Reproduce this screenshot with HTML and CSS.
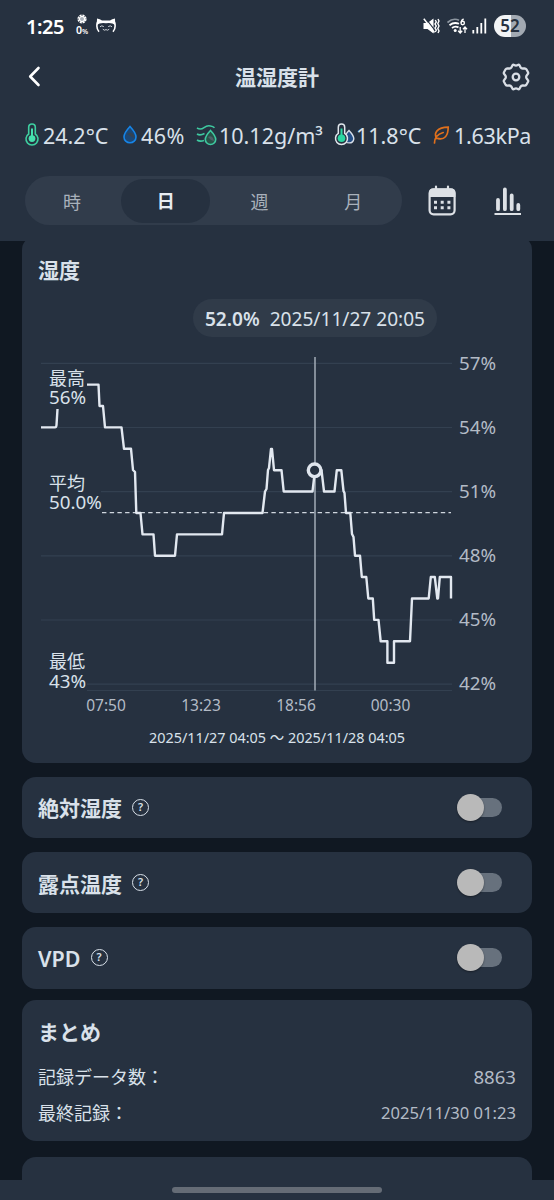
FILE: index.html
```html
<!DOCTYPE html>
<html lang="ja">
<head>
    <meta charset="UTF-8">
    <meta name="viewport" content="width=device-width, initial-scale=1.0">
    <title>温湿度計</title>
    <link rel="stylesheet" href="styles.css">
</head>
<body>

    <div class="app">
        <header class="header">
            <!-- Status bar -->
            <div class="status-bar">
                <span class="clock">1:25</span>
                <div class="weather">
                    <svg width="10" height="10" viewBox="0 0 10 10">
                        <circle cx="5" cy="5" r="3.9" fill="none" stroke="#fff" stroke-width="1.4" stroke-dasharray="2.2 0.86"/>
                        <circle cx="5" cy="5" r="2.6" fill="#aab2bb" stroke="#fff" stroke-width="1.2"/>
                    </svg>
                    <span>0<small>%</small></span>
                </div>
                <svg class="cat" width="20" height="16" viewBox="0 0 20 16">
                    <path d="M1 0.5Q4 0.8 6 2.5H14Q16 0.8 19 0.5L19.2 7Q16 4.2 10 5.2Q4 4.2 0.8 7Z" fill="#fff"/>
                    <path d="M1.5 4Q-0.3 10 3 13.8M18.5 4Q20.3 10 17 13.8" fill="none" stroke="#fff" stroke-width="1.6"/>
                    <path d="M4 8.8Q5.6 7 7.8 8.6M12.2 8.6Q14.4 7 16 8.8M6.8 11.2Q8.5 13 10 11.6Q11.5 13 13.2 11.2" fill="none" stroke="#dfe3e8" stroke-width="0.9"/>
                </svg>
                <div class="status-right">
                    <svg width="17" height="16" viewBox="0 0 17 16">
                        <path d="M0.5 5H4.5L10.5 0.5V15.5L4.5 11H0.5Z" fill="#fff"/>
                        <path d="M2.7 0.5L12.7 13.3" stroke="#263140" stroke-width="1.2"/>
                        <path d="M0.8 0.8L11.5 14.5" stroke="#fff" stroke-width="1.5"/>
                        <path d="M12.3 2L13.3 4L12 6L13.3 8L12 10L13.3 12L12.3 14M15 1L16 3L14.8 5.5L16 8L14.8 10.5L16 13L15 15" fill="none" stroke="#fff" stroke-width="1.4"/>
                    </svg>
                    <svg width="21" height="17" viewBox="0 0 21 17">
                        <path d="M0.5 4.5Q6 -0.5 12 2.2" fill="none" stroke="#8d96a0" stroke-width="1.7"/>
                        <path d="M2.5 7.2Q7 3.6 12 5.8M5 10Q8 7.6 11.5 9.4" fill="none" stroke="#fff" stroke-width="1.8"/>
                        <circle cx="8.2" cy="12.4" r="1.5" fill="#fff"/>
                        <path d="M16.6 1Q14.4 2 14.1 4.6" fill="none" stroke="#fff" stroke-width="1.4"/>
                        <circle cx="15.7" cy="5" r="1.7" fill="none" stroke="#fff" stroke-width="1.4"/>
                        <path d="M13.2 9V14.5M11.2 12.7L13.2 15L15.2 12.7M18 15V9.5M16 11.2L18 9L20 11.2" fill="none" stroke="#fff" stroke-width="1.3"/>
                    </svg>
                    <svg width="15" height="16" viewBox="0 0 15 16">
                        <path d="M1.3 12V15.5M5.3 9V15.5M9.3 5V15.5M13.3 0.5V15.5" stroke="#fff" stroke-width="1.8"/>
                    </svg>
                    <span class="battery">52</span>
                </div>
            </div>

            <!-- Title bar -->
            <div class="title-bar">
                <svg width="32" height="26" viewBox="0 0 32 26">
                    <path d="M16.5 4L8.2 12.5L16.5 21" fill="none" stroke="#fff" stroke-width="2.6" stroke-linecap="round" stroke-linejoin="round"/>
                </svg>
                <h1>温湿度計</h1>
                <svg width="32" height="28" viewBox="-16 -14 32 28">
                    <path d="M-3.5 -11.7Q-2.8 -12.6 -1.8 -12Q0 -10.8 1.8 -12Q2.8 -12.6 3.5 -11.7L4.6 -9.6Q5.3 -8.4 6.8 -8.5L8.7 -8.7Q9.8 -8.7 10.4 -7.7L12 -4.8Q12.5 -3.8 11.8 -3L10.6 -1.4Q9.8 0 10.6 1.4L11.8 3Q12.5 3.8 12 4.8L10.4 7.7Q9.8 8.7 8.7 8.7L6.8 8.5Q5.3 8.4 4.6 9.6L3.5 11.7Q2.8 12.6 1.8 12Q0 10.8 -1.8 12Q-2.8 12.6 -3.5 11.7L-4.6 9.6Q-5.3 8.4 -6.8 8.5L-8.7 8.7Q-9.8 8.7 -10.4 7.7L-12 4.8Q-12.5 3.8 -11.8 3L-10.6 1.4Q-9.8 0 -10.6 -1.4L-11.8 -3Q-12.5 -3.8 -12 -4.8L-10.4 -7.7Q-9.8 -8.7 -8.7 -8.7L-6.8 -8.5Q-5.3 -8.4 -4.6 -9.6Z" fill="none" stroke="#d9dee5" stroke-width="2.3"/>
                    <circle r="3.3" fill="none" stroke="#d9dee5" stroke-width="2.3"/>
                </svg>
            </div>

            <!-- Current readings -->
            <div class="readings">
                <div class="reading temp">
                    <svg width="16" height="23" viewBox="0 0 16 23">
                        <path d="M4.7 11V4.3A3.3 3.3 0 0 1 11.3 4.3V11A6 6 0 1 1 4.7 11Z" fill="none" stroke="#3ecfa0" stroke-width="1.6"/>
                        <circle cx="8" cy="15.6" r="3.4" fill="#45e0ad"/>
                        <path d="M8 5.5V14" stroke="#45e0ad" stroke-width="2"/>
                    </svg>
                    <span>24.2°C</span>
                </div>
                <div class="reading hum">
                    <svg width="14" height="19" viewBox="0 0 14 19">
                        <path d="M7 1.5Q13 8 13 12A6 5.8 0 0 1 1 12Q1 8 7 1.5Z" fill="#1d4774"/>
                        <path d="M4 9Q8 6.5 10.5 9.5L12 13Q8 12 4 9Z" fill="#344251"/>
                        <path d="M7 1.5Q13 8 13 12A6 5.8 0 0 1 1 12Q1 8 7 1.5Z" fill="none" stroke="#1685e8" stroke-width="1.6"/>
                    </svg>
                    <span>46%</span>
                </div>
                <div class="reading abs">
                    <svg width="21" height="22" viewBox="0 0 21 22">
                        <path d="M1 4Q4.5 6.2 8 3.6T14.5 2Q17 2.3 18.5 3.8M1 10Q4 12 8.5 9.5M1 16Q4 18 8 16.5" fill="none" stroke="#3ec9a0" stroke-width="1.6"/>
                        <path d="M14.5 6.5Q19.7 12 19.7 15.5A5.2 5 0 0 1 9.3 15.5Q9.3 12 14.5 6.5Z" fill="#285248" stroke="#3ec9a0" stroke-width="1.6"/>
                        <path d="M12 13Q15 11 17 14L18 17Q14 16 12 13Z" fill="#50606a"/>
                    </svg>
                    <span>10.12g/m³</span>
                </div>
                <div class="reading dew">
                    <svg width="22" height="23" viewBox="0 0 22 23">
                        <path d="M15 7.5Q19.8 12.5 19.8 15.8A4.7 4.7 0 0 1 10.5 16Q10.5 12 15 7.5Z" fill="#244e86" stroke="#d7dee8" stroke-width="1.4"/>
                        <path d="M4.3 10.4V4.2A3.2 3.2 0 0 1 10.7 4.2V10.4A6 6 0 1 1 4.3 10.4Z" fill="#263140" stroke="#e0e6ec" stroke-width="1.5"/>
                        <circle cx="7.5" cy="15.3" r="3.8" fill="#2bd6a2"/>
                        <path d="M7.5 5.5V14" stroke="#2bd6a2" stroke-width="2"/>
                    </svg>
                    <span>11.8°C</span>
                </div>
                <div class="reading vpd">
                    <svg width="17" height="18" viewBox="0 0 17 18">
                        <path d="M3.5 12.5C0.5 7 4 1.5 15.2 1.2C15.2 9.5 11.5 14.5 4.5 12.4M1.5 17C1.5 11.5 5 8 10.2 6.5" fill="none" stroke="#e0701c" stroke-width="1.7" stroke-linecap="round"/>
                    </svg>
                    <span>1.63kPa</span>
                </div>
            </div>

            <!-- Range tabs -->
            <div class="toolbar">
                <div class="tabs">
                    <div class="tab"><span>時</span></div>
                    <div class="tab active"><span>日</span></div>
                    <div class="tab"><span>週</span></div>
                    <div class="tab"><span>月</span></div>
                </div>
                <svg class="calendar-icon" width="28" height="31" viewBox="0 0 28 31">
                    <path d="M8 1.5V5M20 1.5V5" stroke="#dde1e6" stroke-width="2.2" stroke-linecap="round"/>
                    <rect x="1.6" y="4.3" width="25" height="25" rx="4" fill="none" stroke="#dde1e6" stroke-width="2.2"/>
                    <path d="M1 12V7.5Q1 3.5 5 3.5H23Q27.4 3.5 27.4 7.5V12Z" fill="#dde1e6"/>
                    <path d="M6 17.2H9M12.7 17.2H15.7M19.4 17.2H22.4M6 22.7H9M12.7 22.7H15.7M19.4 22.7H22.4" stroke="#dde1e6" stroke-width="3"/>
                </svg>
                <svg class="bars-icon" width="28" height="30" viewBox="0 0 28 30">
                    <path d="M4 14V23.2M10.9 3.5V23.2M17.7 9.5V23.2M24.3 19V23.2" stroke="#dde1e6" stroke-width="3.8" stroke-linecap="round"/>
                    <path d="M0.5 28H27" stroke="#dde1e6" stroke-width="2"/>
                </svg>
            </div>
        </header>

        <main class="content">
            <!-- Humidity chart -->
            <section class="card chart-card">
                <h2>湿度</h2>
                <div class="tooltip"><b>52.0%</b><span>2025/11/27 20:05</span></div>
                <svg class="chart" width="510" height="370" viewBox="22 350 510 370">
                    <g class="grid">
                        <path d="M41 363.3H452M41 427.5H452M101 491.6H452M41 555.8H452M41 620H452M87 684.2H452M87 690.5H452"/>
                    </g>
                    <path class="average" d="M102 512.7H451"/>
                    <path class="cursor" d="M315 357V690.5"/>
                    <path class="line" d="M41 427.4H55Q56.3 427.4 56.5 425L57.5 409M87 384.6H98.5L99.5 406H103L105 427.4H121.5L124 448.8H131L133 470L135 472L136.3 513H140.5L142.5 534.4H153.5L155 555.7H175L177 534.4H222L224 513H262.5L265 491.5L266.5 489L268 470L269 468L271 449L272 449L274 470.2H281.5L283.7 491.5H312.5L315 470.2H321.5L324 491.5H334.5L336.8 470.2H341.3L343.5 491L344.5 493L346 513H350.3L352 534L353.5 537L355 555.7H360L361.8 577H366.3L368.3 598.5H372.8L374.2 619.9H378.5L380.7 641.3H387.4V662.7H394V641.3H410L412 598.5H428.7L430.8 577H434.8L437.3 598.5H438L439.8 577H451V598.5"/>
                    <circle class="marker" cx="314.6" cy="470.3" r="6.3"/>
                    <g class="stat">
                        <text x="49" y="385">最高</text>
                        <text class="value" x="49" y="404">56%</text>
                        <text x="49" y="490">平均</text>
                        <text class="value" x="49" y="509">50.0%</text>
                        <text x="49" y="668">最低</text>
                        <text class="value" x="49" y="687.5">43%</text>
                    </g>
                    <g class="y-axis">
                        <text x="459" y="369.5">57%</text>
                        <text x="459" y="433.6">54%</text>
                        <text x="459" y="497.5">51%</text>
                        <text x="459" y="561.6">48%</text>
                        <text x="459" y="625.8">45%</text>
                        <text x="459" y="690">42%</text>
                    </g>
                    <g class="x-axis">
                        <text x="106" y="711">07:50</text>
                        <text x="201" y="711">13:23</text>
                        <text x="296" y="711">18:56</text>
                        <text x="390.5" y="711">00:30</text>
                    </g>
                </svg>
                <p class="period">2025/11/27 04:05 〜 2025/11/28 04:05</p>
            </section>

            <!-- Optional charts -->
            <section class="card switch-card">
                <h2>絶対湿度</h2>
                <span class="help">?</span>
                <span class="switch"></span>
            </section>
            <section class="card switch-card">
                <h2>露点温度</h2>
                <span class="help">?</span>
                <span class="switch"></span>
            </section>
            <section class="card switch-card">
                <h2 class="latin">VPD</h2>
                <span class="help">?</span>
                <span class="switch"></span>
            </section>

            <!-- Summary -->
            <section class="card summary">
                <h2>まとめ</h2>
                <div class="row"><span>記録データ数：</span><span class="count">8863</span></div>
                <div class="row"><span>最終記録：</span><span class="date">2025/11/30 01:23</span></div>
            </section>

            <section class="card next-card"></section>
        </main>

        <footer class="nav-bar"><div class="home-handle"></div></footer>
    </div>

</body>
</html>
```
FILE: styles.css
```css
* {
    margin: 0;
    padding: 0;
    box-sizing: border-box;
}

body {
    background-color: #101822;
    color: #d9e1ea;
    font-family: "Noto Sans", "Noto Sans CJK JP", sans-serif;
}

svg {
    display: block;
    flex: none;
}

.app {
    width: 554px;
    height: 1200px;
    display: flex;
    flex-direction: column;
    overflow: hidden;
}

/* Header */
.header {
    height: 241px;
    flex: none;
    background-color: #263140;
    z-index: 1;
}

.status-bar {
    height: 52px;
    padding: 0 28px 0 26px;
    display: flex;
    align-items: center;
    color: #fff;
}

.clock {
    width: 50px;
    font-size: 20px;
    font-weight: 600;
    letter-spacing: -0.5px;
}

.weather {
    width: 12px;
    margin-right: 8px;
    display: flex;
    flex-direction: column;
    align-items: center;
    font-size: 10.5px;
    font-weight: 600;
    line-height: 12px;
    white-space: nowrap;
}

.weather small {
    font-size: 7px;
}

.status-right {
    margin-left: auto;
    display: flex;
    align-items: center;
    gap: 4px;
}

.status-right svg:first-child {
    margin-right: 3px;
}

.battery {
    width: 32px;
    height: 22px;
    margin-left: 3px;
    border-radius: 11px;
    background: linear-gradient(90deg, #f2f4f6 52%, #a2a9b2 52%);
    color: #263140;
    font-size: 17px;
    font-weight: 600;
    line-height: 22px;
    text-align: center;
}

.title-bar {
    height: 50px;
    padding: 0 22px;
    display: flex;
    align-items: center;
    justify-content: space-between;
}

.title-bar h1 {
    font-size: 21px;
    font-weight: bold;
    line-height: 30px;
}

/* Current readings */
.readings {
    height: 68px;
    padding: 0 20px 0 24px;
    display: flex;
    align-items: center;
    font-size: 21.5px;
    white-space: nowrap;
}

.reading {
    display: flex;
    align-items: center;
}

.reading svg {
    margin-top: -3px;
}

.reading span {
    margin-top: -1px;
}

.temp {
    width: 99px;
    gap: 3px;
}

.hum {
    width: 73px;
    gap: 4px;
    letter-spacing: 0.4px;
}

.abs {
    width: 138px;
    gap: 2px;
}

.dew {
    width: 99px;
}

.vpd {
    gap: 4px;
    letter-spacing: -0.3px;
}

/* Tabs */
.toolbar {
    height: 61px;
    padding: 0 32px 0 25px;
    display: flex;
    align-items: center;
}

.tabs {
    width: 377px;
    height: 49px;
    padding-right: 2px;
    display: flex;
    border-radius: 25px;
    background-color: #313c4b;
}

.tab {
    flex: 1;
    display: flex;
    justify-content: center;
    align-items: center;
    font-size: 18px;
    color: #a9b1bb;
}

.tab.active span {
    width: 89px;
    line-height: 44px;
    border-radius: 22px;
    background-color: #263140;
    color: #e8edf3;
    font-weight: bold;
    text-align: center;
}

.calendar-icon {
    margin-left: 26px;
}

.bars-icon {
    margin-left: auto;
}

/* Cards */
.content {
    height: 944px;
    flex: none;
    margin-top: -5px;
    padding: 0 22px;
    overflow: hidden;
}

.card {
    background-color: #263140;
    border-radius: 14px;
    margin-bottom: 13.5px;
}

.card h2 {
    font-size: 21px;
    font-weight: bold;
    line-height: 30px;
}

.chart-card {
    height: 527px;
    padding-top: 19px;
    display: flex;
    flex-direction: column;
}

.chart-card h2 {
    padding-left: 16px;
}

.tooltip {
    align-self: flex-start;
    width: 244px;
    height: 38px;
    margin: 14px 0 0 171px;
    padding-top: 1px;
    border-radius: 19px;
    background-color: #303b49;
    display: flex;
    justify-content: center;
    align-items: center;
    gap: 10px;
    font-size: 19.1px;
    white-space: nowrap;
}

.tooltip b {
    font-weight: 600;
}

/* Chart */
.chart {
    margin-top: 13px;
}

.grid path {
    stroke: #334050;
    stroke-width: 1.2;
}

.average {
    stroke: #cfd6de;
    stroke-width: 1.2;
    stroke-dasharray: 4.4 3.3;
}

.cursor {
    stroke: #a3acb7;
    stroke-width: 1.5;
}

.line {
    fill: none;
    stroke: #e2e8f0;
    stroke-width: 2.4;
    stroke-linejoin: round;
}

.marker {
    fill: #263140;
    stroke: #dfe5ed;
    stroke-width: 3.4;
}

.stat text {
    fill: #d9e1ea;
    font-size: 18px;
}

.stat .value {
    font-size: 18.8px;
}

.y-axis text {
    fill: #b3bbc6;
    font-size: 18.8px;
}

.x-axis text {
    fill: #b3bbc6;
    font-size: 15.5px;
    text-anchor: middle;
}

.period {
    margin-top: 8px;
    font-size: 14.4px;
    line-height: 20px;
    text-align: center;
}

/* Switch cards */
.switch-card {
    height: 61.7px;
    padding: 0 30px 0 16px;
    display: flex;
    align-items: center;
}

.switch-card h2 {
    padding-top: 2px;
}

.switch-card .latin {
    font-size: 21.5px;
    font-weight: 600;
}

.help {
    width: 17px;
    height: 17px;
    margin-left: 10px;
    border: 1.4px solid #d9e1ea;
    border-radius: 50%;
    font-size: 11px;
    font-weight: 600;
    line-height: 14.5px;
    text-align: center;
}

.switch {
    width: 41px;
    height: 19px;
    margin-left: auto;
    border-radius: 10px;
    background-color: #67717d;
    display: flex;
    align-items: center;
}

.switch::before {
    content: "";
    width: 27px;
    height: 27px;
    margin-left: -4px;
    border-radius: 50%;
    background-color: #b9b9b9;
    flex: none;
    box-shadow: 0 1px 2px rgba(0, 0, 0, 0.4);
}

/* Summary */
.summary {
    height: 140.5px;
    margin-top: -2px;
    margin-bottom: 16px;
    padding: 17px 16px 0;
}

.summary h2 {
    margin-bottom: 11px;
}

.row {
    height: 36px;
    display: flex;
    justify-content: space-between;
    align-items: center;
    font-size: 18px;
}

.count {
    color: #b3bbc6;
    font-size: 18.6px;
}

.date {
    color: #b3bbc6;
    font-size: 16.6px;
}

.next-card {
    height: 60px;
}

/* Gesture bar */
.nav-bar {
    height: 20px;
    flex: none;
    padding-top: 7px;
    background-color: #263140;
}

.home-handle {
    width: 210px;
    height: 6px;
    margin: 0 auto;
    border-radius: 3px;
    background-color: #656c76;
}
```
